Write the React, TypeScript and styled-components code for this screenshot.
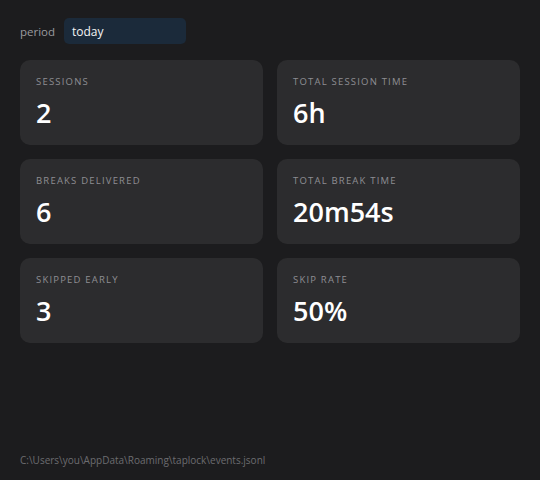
import React from 'react';
import styled, { createGlobalStyle } from 'styled-components';

const GlobalStyle = createGlobalStyle`
  html, body {
    margin: 0;
    padding: 0;
    background: #1c1c1e;
    font-family: "Open Sans", "Noto Sans", sans-serif;
  }
`;

const Page = styled.div`
  box-sizing: border-box;
  width: 540px;
  height: 480px;
  padding: 18px 20px 13px;
  display: flex;
  flex-direction: column;
  color: #f2f2f2;
`;

const Toolbar = styled.div`
  display: flex;
  align-items: center;
  gap: 10px;
  margin-bottom: 16px;
`;

const ToolbarLabel = styled.span`
  width: 34px;
  font-size: 11.5px;
  color: #9a9a9e;
`;

const PeriodSelect = styled.div`
  box-sizing: border-box;
  width: 122px;
  height: 26px;
  padding: 0 8px;
  display: flex;
  align-items: center;
  background: #1b2a3a;
  border-radius: 5px;
  font-size: 12px;
  color: #f4f4f4;
`;

const Grid = styled.div`
  display: grid;
  grid-template-columns: 1fr 1fr;
  gap: 14px;
`;

const Card = styled.div`
  box-sizing: border-box;
  height: 85px;
  padding: 15px 16px;
  background: #2c2c2e;
  border-radius: 10px;
`;

const CardLabel = styled.div`
  font-size: 9.5px;
  letter-spacing: 1.2px;
  text-transform: uppercase;
  color: #8e8e93;
  line-height: 14px;
`;

const CardValue = styled.div`
  margin-top: 7px;
  font-size: 27px;
  font-weight: 600;
  line-height: 34px;
  color: #ffffff;
`;

const Footer = styled.div`
  margin-top: auto;
  font-size: 10px;
  color: #6c6c70;
`;

const stats = [
  { label: 'Sessions', value: '2' },
  { label: 'Total session time', value: '6h' },
  { label: 'Breaks delivered', value: '6' },
  { label: 'Total break time', value: '20m54s' },
  { label: 'Skipped early', value: '3' },
  { label: 'Skip rate', value: '50%' },
];

export default function App() {
  return (
    <>
      <GlobalStyle />
      <Page>
        <Toolbar>
          <ToolbarLabel>period</ToolbarLabel>
          <PeriodSelect>today</PeriodSelect>
        </Toolbar>
        <Grid>
          {stats.map(s => (
            <Card key={s.label}>
              <CardLabel>{s.label}</CardLabel>
              <CardValue>{s.value}</CardValue>
            </Card>
          ))}
        </Grid>
        <Footer>C:\Users\you\AppData\Roaming\taplock\events.jsonl</Footer>
      </Page>
    </>
  );
}
